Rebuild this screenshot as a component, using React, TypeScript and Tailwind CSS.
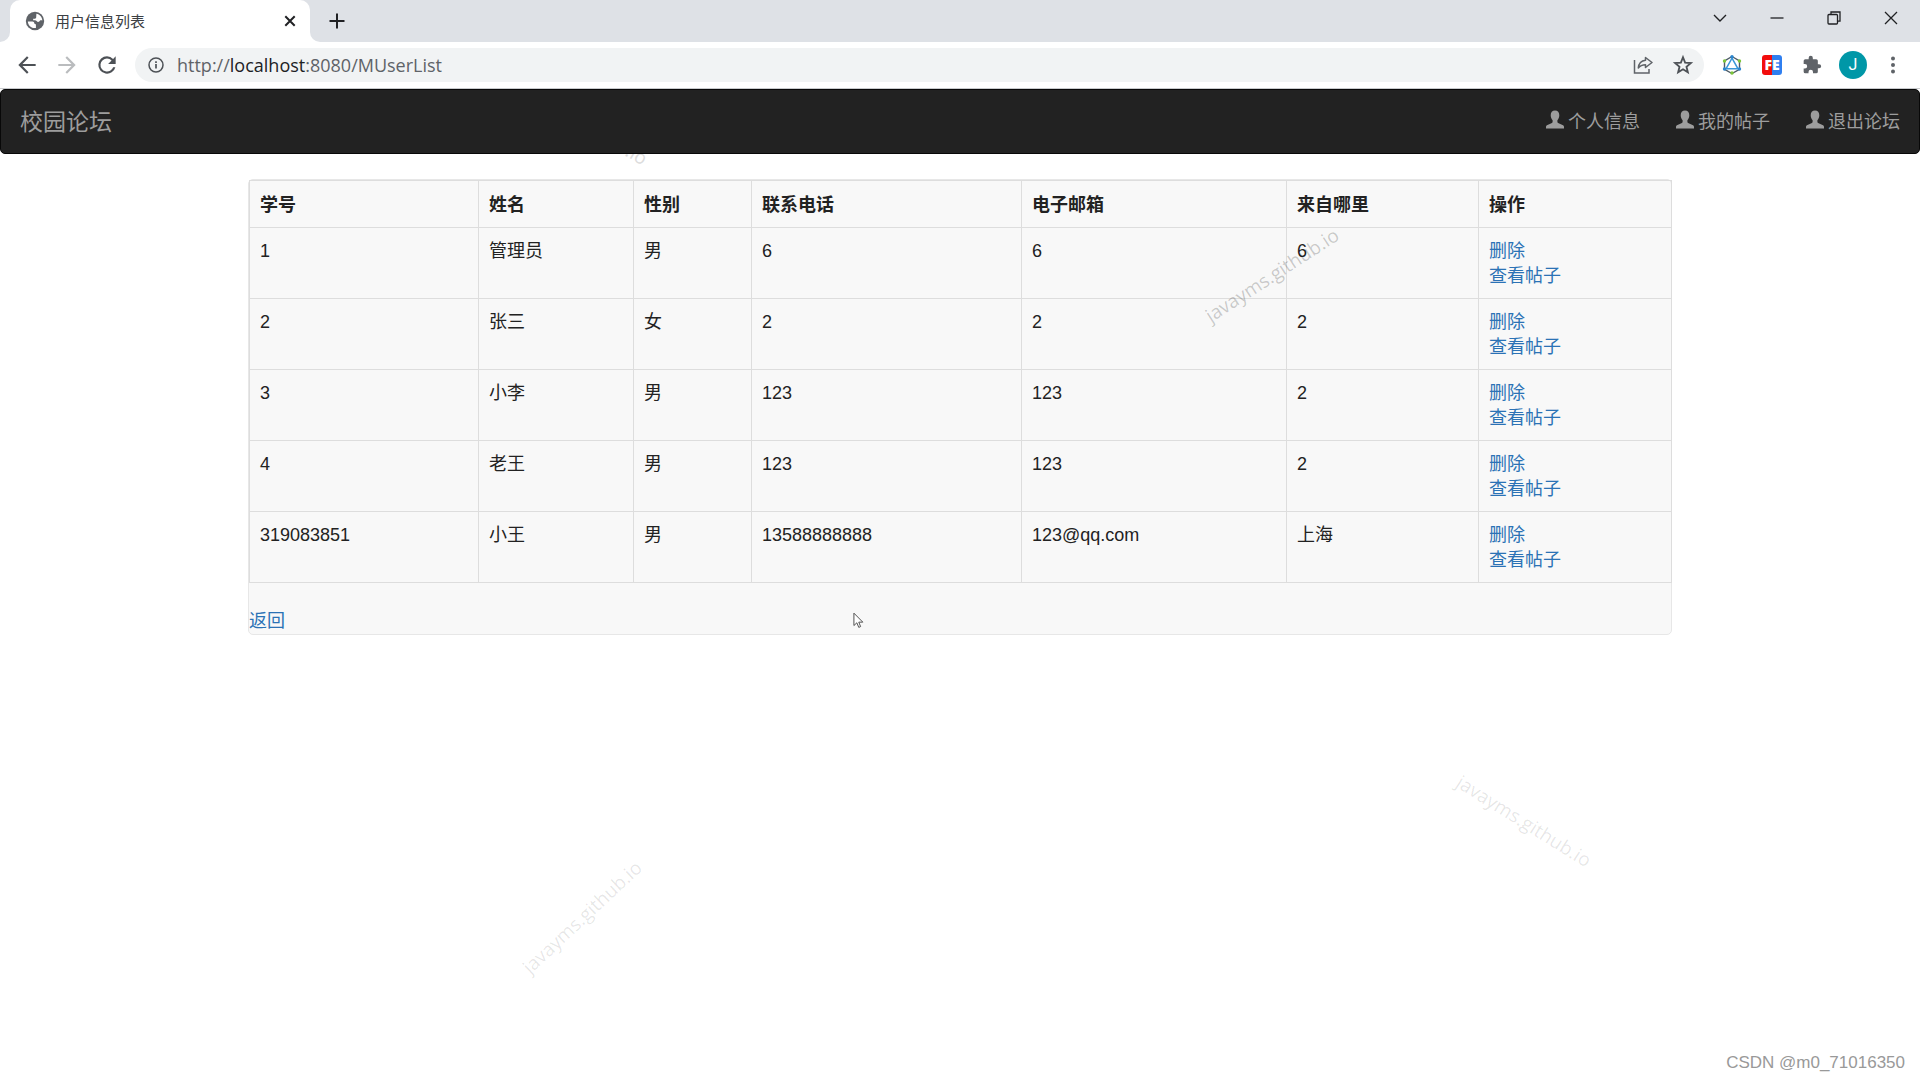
import type { ReactNode } from 'react';

interface User {
  id: string;
  name: string;
  gender: string;
  phone: string;
  email: string;
  city: string;
}

const USERS: User[] = [
  { id: '1', name: '管理员', gender: '男', phone: '6', email: '6', city: '6' },
  { id: '2', name: '张三', gender: '女', phone: '2', email: '2', city: '2' },
  { id: '3', name: '小李', gender: '男', phone: '123', email: '123', city: '2' },
  { id: '4', name: '老王', gender: '男', phone: '123', email: '123', city: '2' },
  { id: '319083851', name: '小王', gender: '男', phone: '13588888888', email: '123@qq.com', city: '上海' },
];

const COLUMNS = [
  { title: '学号', width: 'w-[229px]' },
  { title: '姓名', width: 'w-[155px]' },
  { title: '性别', width: 'w-[118px]' },
  { title: '联系电话', width: 'w-[270px]' },
  { title: '电子邮箱', width: 'w-[265px]' },
  { title: '来自哪里', width: 'w-[192px]' },
  { title: '操作', width: 'w-[193px]' },
];

const NAV_LINKS = ['个人信息', '我的帖子', '退出论坛'];

const CELL = 'border border-[#ddd] px-[10px] pt-[11px] pb-[9px] text-left align-top';
const UI_FONT = "font-['Open_Sans','Noto_Sans_CJK_SC',sans-serif]";

function IconButton({ label, className = '', children }: { label: string; className?: string; children: ReactNode }) {
  return (
    <button type="button" aria-label={label} className={`flex shrink-0 items-center justify-center ${className}`}>
      {children}
    </button>
  );
}

// ── Browser chrome ────────────────────────────────────────────────────────────

function TabStrip() {
  return (
    <div className="flex h-[42px] items-end bg-[#dee1e6]">
      {/* rounded foot on the left side of the tab */}
      <div className="h-[10px] w-[10px] bg-white">
        <div className="h-full w-full rounded-br-[10px] bg-[#dee1e6]" />
      </div>
      <div className="flex h-full w-[300px] items-center rounded-t-[10px] bg-white pr-[10px] pl-[14px]">
        <svg viewBox="0 0 24 24" className="h-[22px] w-[22px]">
          <circle cx="12" cy="12" r="10" fill="#5f6368" />
          <path
            d="M4.200 12.500h5c1.300 0 2 .8 2 1.800 0 .8.500 1.200 1.200 1.200h.6v4.200c-4.600.6-8.800-2.800-8.800-7.200zM13.500 4.200c3.600.6 6.300 3.700 6.500 7.300-.8-.5-1.300-.5-2.200-.3l-1.200 1.300c-.8.8-2 .6-2.600-.2-.5-.7-1.200-1-2.200-1H10V9.500h1.800c1 0 1.500-.6 1.500-1.500z"
            fill="#fff"
          />
        </svg>
        <span className="ml-[9px] flex-1 text-[15px] text-[#3c4043]">用户信息列表</span>
        <IconButton label="关闭标签页" className="h-5 w-5">
          <svg viewBox="0 0 20 20" className="h-5 w-5" stroke="#202124" strokeWidth="2" fill="none">
            <path d="M5.300 5.300l9.400 9.400M14.700 5.300l-9.400 9.400" />
          </svg>
        </IconButton>
      </div>
      <div className="h-[10px] w-[10px] bg-white">
        <div className="h-full w-full rounded-bl-[10px] bg-[#dee1e6]" />
      </div>
      <IconButton label="新标签页" className="ml-[7px] h-full w-5">
        <svg viewBox="0 0 20 20" className="h-5 w-5" stroke="#202124" strokeWidth="2" fill="none">
          <path d="M10 2.500v15M2.500 10h15" />
        </svg>
      </IconButton>
      <div className="ml-auto flex h-[36px] self-start">
        <IconButton label="搜索标签页" className="w-[57px]">
          <svg viewBox="0 0 16 16" className="h-4 w-4" stroke="#202124" strokeWidth="1.400" fill="none">
            <path d="M2 5l6 6 6-6" />
          </svg>
        </IconButton>
        <IconButton label="最小化" className="w-[57px]">
          <svg viewBox="0 0 16 16" className="h-4 w-4" stroke="#202124" strokeWidth="1.300" fill="none">
            <path d="M1.500 8h13" />
          </svg>
        </IconButton>
        <IconButton label="还原" className="w-[57px]">
          <svg viewBox="0 0 16 16" className="h-4 w-4" stroke="#202124" strokeWidth="1.300" fill="none">
            <rect x="2" y="4.500" width="9.500" height="9.500" rx="1" />
            <path d="M5 4.500V2h9v9.200h-2.500" />
          </svg>
        </IconButton>
        <IconButton label="关闭" className="w-[58px]">
          <svg viewBox="0 0 16 16" className="h-4 w-4" stroke="#202124" strokeWidth="1.300" fill="none">
            <path d="M2 2l12 12M14 2L2 14" />
          </svg>
        </IconButton>
      </div>
    </div>
  );
}

function Toolbar() {
  return (
    <div className="flex h-[47px] items-center border-b border-[#c8cacd] bg-white pr-[13px] pl-[13px]">
      <IconButton label="后退" className="h-[27px] w-[27px]">
        <svg viewBox="0 0 24 24" className="h-[26px] w-[26px]" fill="#4d5156">
          <path d="M20 11H7.830l5.590-5.590L12 4l-8 8 8 8 1.410-1.410L7.830 13H20v-2z" />
        </svg>
      </IconButton>
      <IconButton label="前进" className="ml-[13px] h-[27px] w-[27px]">
        <svg viewBox="0 0 24 24" className="h-[26px] w-[26px]" fill="#babcbe">
          <path d="M12 4l-1.410 1.410L16.170 11H4v2h12.170l-5.580 5.590L12 20l8-8z" />
        </svg>
      </IconButton>
      <IconButton label="重新加载" className="ml-[13px] h-[27px] w-[27px]">
        <svg viewBox="0 0 24 24" className="h-[26px] w-[26px]" fill="#4d5156">
          <path d="M17.650 6.350A7.958 7.958 0 0 0 12 4a8 8 0 1 0 7.730 10h-2.080A6 6 0 1 1 12 6c1.660 0 3.140.69 4.220 1.780L13 11h7V4l-2.350 2.350z" />
        </svg>
      </IconButton>
      <div className="ml-[15px] flex h-[34px] min-w-0 flex-1 items-center rounded-full bg-[#f1f3f4] pr-[10px] pl-[13px]">
        <svg viewBox="0 0 16 16" className="h-4 w-4" fill="none" stroke="#4d5156" strokeWidth="1.500">
          <circle cx="8" cy="8" r="7" />
          <path d="M8 7v4.500M8 4.300v1.600" strokeWidth="1.700" />
        </svg>
        <span className="ml-[13px] flex-1 text-[18px] leading-6 text-[#5f6368]">
          http://<span className="text-[#202124]">localhost</span>:8080/MUserList
        </span>
        <IconButton label="分享此页面" className="h-5 w-5">
          <svg viewBox="0 0 20 20" className="h-5 w-5" stroke="#5f6368" strokeWidth="1.500" fill="none">
            <path d="M1.500 5v13h14.500v-4" />
            <path d="M12.500 2.500l6.500 5-6.500 5V9.700c-3 0-5.500 1-7.200 3.300C5.700 9 8 5.800 12.500 5.300z" strokeLinejoin="round" />
          </svg>
        </IconButton>
        <IconButton label="为此标签页添加书签" className="ml-[19px] h-[22px] w-[22px]">
          <svg viewBox="0 0 24 24" className="h-[22px] w-[22px]" fill="none" stroke="#4d5156" strokeWidth="2">
            <path d="M12 3.500l2.300 5.900 6.300.5-4.800 4 1.500 6.100-5.300-3.300L6.700 20l1.500-6.100-4.800-4 6.300-.5z" />
          </svg>
        </IconButton>
      </div>
      <IconButton label="扩展程序 A" className="ml-[18px] h-5 w-5">
        <svg viewBox="0 0 20 20" className="h-5 w-5" fill="none">
          <path d="M10 1.500l7.500 4.300v8.500L10 18.500l-7.500-4.200V5.800z" stroke="#4d5b66" strokeWidth="1.400" />
          <path d="M10 3.200l6 10.600H4z" stroke="#3b97d8" strokeWidth="1.500" />
          <circle cx="10" cy="1.800" r="1.700" fill="#2b86cf" />
          <circle cx="2.500" cy="14" r="1.700" fill="#2b86cf" />
          <circle cx="17.500" cy="14" r="1.700" fill="#2b86cf" />
          <circle cx="2.500" cy="6" r="1.700" fill="#7cc53a" />
          <circle cx="17.500" cy="6" r="1.700" fill="#7cc53a" />
          <circle cx="10" cy="18" r="1.700" fill="#7cc53a" />
        </svg>
      </IconButton>
      <IconButton
        label="FE 助手"
        className="ml-5 h-5 w-5 rounded-[3px] bg-linear-to-r from-[#f20d0d] from-50% to-[#2f7ff0] to-50% text-[14px] leading-5 font-extrabold text-white"
      >
        FE
      </IconButton>
      <IconButton label="扩展程序" className="ml-5 h-5 w-5">
        <svg viewBox="0 0 24 24" className="h-5 w-5" fill="#5f6368">
          <path d="M20.500 11H19V7a2 2 0 0 0-2-2h-4V3.500a2.500 2.500 0 0 0-5 0V5H4a2 2 0 0 0-2 2v3.800h1.500a2.700 2.700 0 0 1 0 5.400H2V20a2 2 0 0 0 2 2h3.800v-1.500a2.700 2.700 0 0 1 5.400 0V22H17a2 2 0 0 0 2-2v-4h1.500a2.500 2.500 0 0 0 0-5z" />
        </svg>
      </IconButton>
      <IconButton label="个人资料" className="ml-[17px] h-7 w-7 rounded-full bg-[#0097a7] font-['Roboto',sans-serif] text-[16px] text-white">
        J
      </IconButton>
      <IconButton label="菜单" className="ml-3 h-7 w-7">
        <svg viewBox="0 0 24 24" className="h-6 w-6" fill="#5f6368">
          <circle cx="12" cy="5.500" r="2" />
          <circle cx="12" cy="12" r="2" />
          <circle cx="12" cy="18.500" r="2" />
        </svg>
      </IconButton>
    </div>
  );
}

// ── Page ──────────────────────────────────────────────────────────────────────

function Navbar() {
  return (
    <nav className="mb-[25px] flex min-h-[65px] items-center justify-between rounded-[5px] border border-[#080808] bg-[#222] px-[19px] pt-[2px] text-[#9d9d9d]">
      <a href="#home" className="text-[23px] leading-[25px]">
        校园论坛
      </a>
      <ul className="flex gap-9">
        {NAV_LINKS.map((label) => (
          <li key={label}>
            <a href="#nav" className="flex items-start gap-1">
              <svg viewBox="0 0 18 18" className="h-[19px] w-[18px]" fill="#9d9d9d">
                <path d="M9 0c2.800 0 4.300 1.900 4.300 4.800 0 2-.8 3.900-1.900 5v1.700c0 .5.300.8.700 1l4.400 1.900c.9.400 1.500 1 1.500 2V18H0v-1.600c0-1 .6-1.600 1.500-2l4.400-1.900c.4-.2.700-.5.700-1V9.800c-1.100-1.100-1.900-3-1.900-5C4.700 1.900 6.200 0 9 0z" />
              </svg>
              {label}
            </a>
          </li>
        ))}
      </ul>
    </nav>
  );
}

function UserTable() {
  return (
    <table className="mb-[26px] w-full table-fixed border-collapse">
      <thead>
        <tr>
          {COLUMNS.map((col) => (
            <th key={col.title} className={`border border-[#ddd] px-[10px] pt-3 pb-[9px] text-left font-bold ${col.width}`}>
              {col.title}
            </th>
          ))}
        </tr>
      </thead>
      <tbody>
        {USERS.map((user) => (
          <tr key={user.id}>
            <td className={CELL}>{user.id}</td>
            <td className={CELL}>{user.name}</td>
            <td className={CELL}>{user.gender}</td>
            <td className={CELL}>{user.phone}</td>
            <td className={CELL}>{user.email}</td>
            <td className={CELL}>{user.city}</td>
            <td className={CELL}>
              <a href="#delete" className="block w-fit text-[#2b72b5]">
                删除
              </a>
              <a href="#posts" className="block w-fit text-[#2b72b5]">
                查看帖子
              </a>
            </td>
          </tr>
        ))}
      </tbody>
    </table>
  );
}

function Watermark({ className }: { className: string }) {
  return (
    <span
      aria-hidden="true"
      className={`pointer-events-none absolute -translate-x-1/2 -translate-y-1/2 text-[19px] leading-6 whitespace-nowrap ${UI_FONT} ${className}`}
    >
      javayms.github.io
    </span>
  );
}

export default function App() {
  return (
    <div className="relative min-h-screen overflow-hidden bg-white">
      <header className={`relative z-10 ${UI_FONT}`}>
        <TabStrip />
        <Toolbar />
      </header>

      <Watermark className="top-[121px] left-[579px] rotate-[30deg] text-[#dcdcdc]" />

      <div className="relative font-['Liberation_Sans','Noto_Sans_CJK_SC',sans-serif] text-[18px] leading-[25px] text-[#222]">
        <Navbar />
        <main className="mx-auto max-w-[1424px] rounded-[5px] border border-[#e7e7e7] bg-[#f8f8f8]">
          <UserTable />
          <a href="#back" className="block w-fit text-[#2b72b5]">
            返回
          </a>
        </main>
      </div>

      <Watermark className="top-[275px] left-[1272px] -rotate-[33deg] text-black/20" />
      <Watermark className="top-[821px] left-[1524px] rotate-[32deg] text-black/10" />
      <Watermark className="top-[917px] left-[582px] -rotate-[43deg] text-black/10" />

      {/* mouse pointer */}
      <svg viewBox="0 0 12 18" className="absolute top-[612px] left-[853px] h-[17px] w-[11px]" fill="#fff" stroke="#444" strokeWidth="1">
        <path d="M1 1v13.500l3.200-3 2.100 5 2-.9-2-4.800h4.400z" />
      </svg>

      <div className="absolute right-[15px] bottom-[5px] font-['Liberation_Sans',sans-serif] text-[17px] leading-6 text-[#999]">
        CSDN @m0_71016350
      </div>
    </div>
  );
}
